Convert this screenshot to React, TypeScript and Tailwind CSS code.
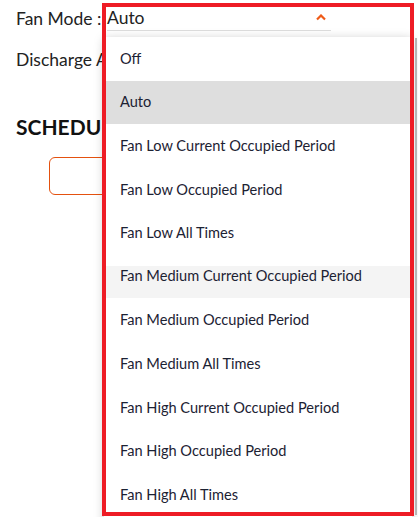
import React from "react";

const items = [
  "Off",
  "Auto",
  "Fan Low Current Occupied Period",
  "Fan Low Occupied Period",
  "Fan Low All Times",
  "Fan Medium Current Occupied Period",
  "Fan Medium Occupied Period",
  "Fan Medium All Times",
  "Fan High Current Occupied Period",
  "Fan High Occupied Period",
  "Fan High All Times",
];

export default function App() {
  return (
    <div
      className="relative w-[418px] h-[517px] overflow-hidden bg-white text-[#222]"
      style={{ fontFamily: "Lato, 'Open Sans', sans-serif" }}
    >
      {/* page content */}
      <div className="flex flex-col pl-4">
        <div className="flex items-center h-[24px] mt-[7px] text-[17.5px]">
          <span className="w-[91px] shrink-0 whitespace-nowrap">Fan Mode :</span>
          <div className="relative flex items-center w-[224px] h-[24px] border-b border-[#dddddd]">
            <span>Auto</span>
            <svg
              className="absolute left-[209px] top-[7px]"
              width="10"
              height="7"
              viewBox="0 0 10 7"
            >
              <path d="M1 5.5 L5 1.5 L9 5.5" fill="none" stroke="#ef5a17" strokeWidth="2.2" />
            </svg>
          </div>
        </div>
        <div className="mt-[17px] h-[24px] leading-[24px] text-[17.5px] whitespace-nowrap">Discharge Air Temp :</div>
        <div className="mt-[40px] h-[30px] leading-[30px] text-[21px] font-bold text-[#111]">SCHEDULE</div>
        <div className="ml-[33px] mt-[15px] w-[200px] h-[38px] rounded-[6px] border border-[#e4510f]" />
      </div>

      {/* dropdown menu */}
      <div className="absolute left-[104px] top-[37px] w-[308px] h-[490px] bg-white shadow-[0_2px_10px_rgba(0,0,0,0.22)] text-[14.6px] text-[#1c2233]">
        {items.map((t, i) => (
          <div
            key={t}
            className={`relative flex items-center h-[43.6px] pl-4 ${i === 1 ? "bg-[#dedede]" : ""}`}
          >
            {i === 5 && <div className="absolute left-0 right-0 top-[11px] bottom-[1px] bg-[#f4f4f4]" />}
            <span className={`relative whitespace-nowrap ${i === 5 ? "-mt-[1px]" : ""}`}>{t}</span>
          </div>
        ))}
      </div>

      {/* scrollbar */}
      <div className="absolute left-[415px] top-[38px] w-[2px] h-[477px] bg-[#b5b5b5]" />

      {/* red annotation */}
      <div className="absolute left-[102px] top-[3px] w-[312px] h-[513px] border-[4px] border-[#ee1c25]" />
    </div>
  );
}
